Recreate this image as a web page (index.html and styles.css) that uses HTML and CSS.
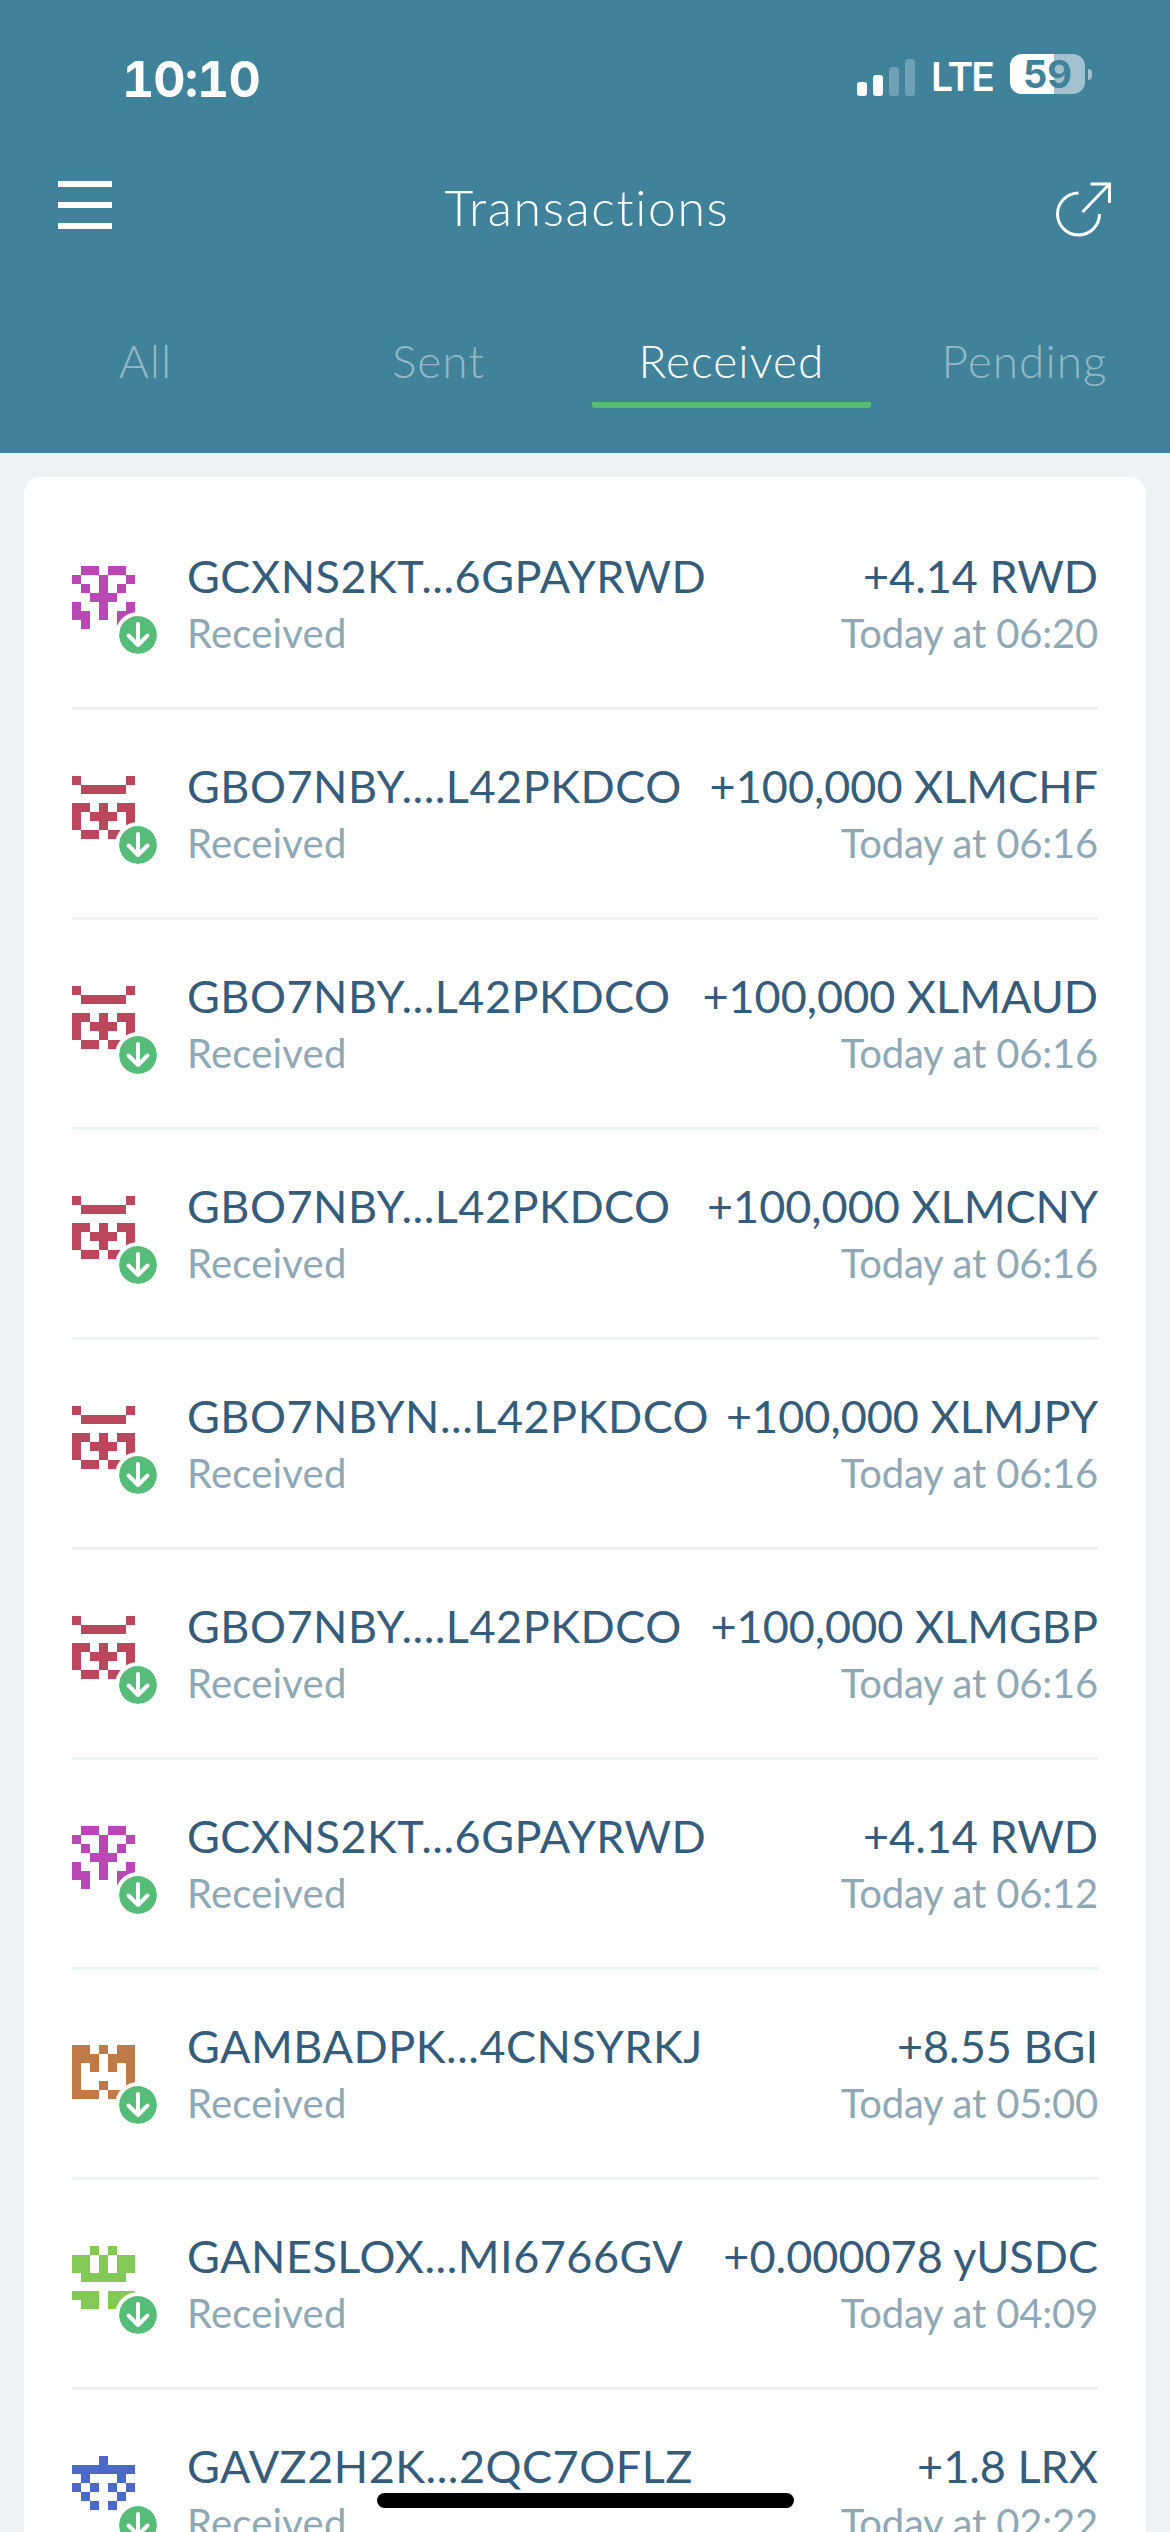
FILE: index.html
```html
<!DOCTYPE html>
<html lang="en">
<head>
    <meta charset="UTF-8">
    <meta name="viewport" content="width=device-width, initial-scale=1.0">
    <title>Transactions</title>
    <link rel="stylesheet" href="styles.css">
</head>
<body>

    <svg class="defs" width="0" height="0">
        <defs>
            <symbol id="id-purple" viewBox="0 0 7 7"><path d="M1 0h2v1h-2zM4 0h2v1h-2zM0 1h1v1h-1zM3 1h1v1h-1zM6 1h1v1h-1zM1 2h1v1h-1zM3 2h1v1h-1zM5 2h1v1h-1zM2 3h3v1h-3zM0 4h1v1h-1zM3 4h1v2h-1zM6 4h1v1h-1zM0 5h2v1h-2zM5 5h2v1h-2zM1 6h1v1h-1zM5 6h1v1h-1z"/></symbol>
            <symbol id="id-red" viewBox="0 0 7 7"><path d="M0 0h1v1h-1zM6 0h1v1h-1zM1 1h5v1h-5zM0 3h2v1h-2zM3 3h1v1h-1zM5 3h2v1h-2zM0 4h1v2h-1zM2 4h3v1h-3zM6 4h1v2h-1zM3 5h1v1h-1zM1 6h2v1h-2zM4 6h2v1h-2z"/></symbol>
            <symbol id="id-orange" viewBox="0 0 7 7"><path d="M0 1h2v1h-2zM3 1h1v1h-1zM5 1h2v1h-2zM0 2h3v1h-3zM4 2h3v1h-3zM0 3h1v1h-1zM2 3h1v1h-1zM4 3h1v1h-1zM6 3h1v1h-1zM0 4h1v1h-1zM6 4h1v1h-1zM0 5h1v1h-1zM3 5h1v1h-1zM6 5h1v1h-1zM0 6h3v1h-3zM4 6h3v1h-3z"/></symbol>
            <symbol id="id-green" viewBox="0 0 7 7"><path d="M2 0h1v1h-1zM4 0h1v1h-1zM0 1h2v2h-2zM3 1h1v2h-1zM5 1h2v2h-2zM1 3h5v1h-5zM0 5h3v1h-3zM4 5h3v1h-3zM1 6h2v1h-2zM4 6h2v1h-2z"/></symbol>
            <symbol id="id-blue" viewBox="0 0 7 7"><path d="M3 0h1v1h-1zM0 1h7v1h-7zM1 2h1v1h-1zM5 2h1v1h-1zM0 3h1v1h-1zM2 3h1v1h-1zM4 3h1v1h-1zM6 3h1v1h-1zM1 4h1v1h-1zM5 4h1v1h-1zM2 5h1v1h-1zM4 5h1v1h-1z"/></symbol>
            <symbol id="arrow-down" viewBox="0 0 38 38"><path d="M19 8v21M9.500 19.500l9.500 9.500 9.500-9.500" fill="none" stroke="#fff" stroke-width="4" stroke-linecap="round" stroke-linejoin="round"/></symbol>
        </defs>
    </svg>

    <header class="header">
        <div class="status-bar">
            <span class="clock">10:10</span>
            <div class="status-right">
                <div class="signal">
                    <span class="bar bar-1"></span>
                    <span class="bar bar-2"></span>
                    <span class="bar bar-3"></span>
                    <span class="bar bar-4"></span>
                </div>
                <span class="lte">LTE</span>
                <div class="battery">
                    <div class="battery-body">
                        <span class="battery-fill"></span>
                        <span class="battery-text">59</span>
                    </div>
                    <span class="battery-tip"></span>
                </div>
            </div>
        </div>

        <div class="nav-bar">
            <div class="menu-icon">
                <span></span>
                <span></span>
                <span></span>
            </div>
            <h1>Transactions</h1>
            <svg class="share-icon" width="60" height="60" viewBox="0 0 60 60">
                <path d="M22.500 13A21 21 0 1 0 43.500 34" fill="none" stroke="#fff" stroke-width="3"/>
                <path d="M26.500 32L52.500 5M34.500 4H53.500V23" fill="none" stroke="#fff" stroke-width="3"/>
            </svg>
        </div>

        <nav class="tabs">
            <div class="tab">All</div>
            <div class="tab">Sent</div>
            <div class="tab active">Received</div>
            <div class="tab">Pending</div>
        </nav>
    </header>

    <main class="card">
        <div class="row">
            <div class="avatar"><svg class="identicon purple"><use href="#id-purple"/></svg><span class="badge"><svg><use href="#arrow-down"/></svg></span></div>
            <div class="info"><div class="line-top"><span>GCXNS2KT...6GPAYRWD</span><span>+4.14 RWD</span></div><div class="line-sub"><span>Received</span><span>Today at 06:20</span></div></div>
        </div>
        <div class="row">
            <div class="avatar"><svg class="identicon red"><use href="#id-red"/></svg><span class="badge"><svg><use href="#arrow-down"/></svg></span></div>
            <div class="info"><div class="line-top"><span>GBO7NBY....L42PKDCO</span><span>+100,000 XLMCHF</span></div><div class="line-sub"><span>Received</span><span>Today at 06:16</span></div></div>
        </div>
        <div class="row">
            <div class="avatar"><svg class="identicon red"><use href="#id-red"/></svg><span class="badge"><svg><use href="#arrow-down"/></svg></span></div>
            <div class="info"><div class="line-top"><span>GBO7NBY...L42PKDCO</span><span>+100,000 XLMAUD</span></div><div class="line-sub"><span>Received</span><span>Today at 06:16</span></div></div>
        </div>
        <div class="row">
            <div class="avatar"><svg class="identicon red"><use href="#id-red"/></svg><span class="badge"><svg><use href="#arrow-down"/></svg></span></div>
            <div class="info"><div class="line-top"><span>GBO7NBY...L42PKDCO</span><span>+100,000 XLMCNY</span></div><div class="line-sub"><span>Received</span><span>Today at 06:16</span></div></div>
        </div>
        <div class="row">
            <div class="avatar"><svg class="identicon red"><use href="#id-red"/></svg><span class="badge"><svg><use href="#arrow-down"/></svg></span></div>
            <div class="info"><div class="line-top"><span>GBO7NBYN...L42PKDCO</span><span>+100,000 XLMJPY</span></div><div class="line-sub"><span>Received</span><span>Today at 06:16</span></div></div>
        </div>
        <div class="row">
            <div class="avatar"><svg class="identicon red"><use href="#id-red"/></svg><span class="badge"><svg><use href="#arrow-down"/></svg></span></div>
            <div class="info"><div class="line-top"><span>GBO7NBY....L42PKDCO</span><span>+100,000 XLMGBP</span></div><div class="line-sub"><span>Received</span><span>Today at 06:16</span></div></div>
        </div>
        <div class="row">
            <div class="avatar"><svg class="identicon purple"><use href="#id-purple"/></svg><span class="badge"><svg><use href="#arrow-down"/></svg></span></div>
            <div class="info"><div class="line-top"><span>GCXNS2KT...6GPAYRWD</span><span>+4.14 RWD</span></div><div class="line-sub"><span>Received</span><span>Today at 06:12</span></div></div>
        </div>
        <div class="row">
            <div class="avatar"><svg class="identicon orange"><use href="#id-orange"/></svg><span class="badge"><svg><use href="#arrow-down"/></svg></span></div>
            <div class="info"><div class="line-top"><span>GAMBADPK...4CNSYRKJ</span><span>+8.55 BGI</span></div><div class="line-sub"><span>Received</span><span>Today at 05:00</span></div></div>
        </div>
        <div class="row">
            <div class="avatar"><svg class="identicon green"><use href="#id-green"/></svg><span class="badge"><svg><use href="#arrow-down"/></svg></span></div>
            <div class="info"><div class="line-top"><span>GANESLOX...MI6766GV</span><span>+0.000078 yUSDC</span></div><div class="line-sub"><span>Received</span><span>Today at 04:09</span></div></div>
        </div>
        <div class="row">
            <div class="avatar"><svg class="identicon blue"><use href="#id-blue"/></svg><span class="badge"><svg><use href="#arrow-down"/></svg></span></div>
            <div class="info"><div class="line-top"><span>GAVZ2H2K...2QC7OFLZ</span><span>+1.8 LRX</span></div><div class="line-sub"><span>Received</span><span>Today at 02:22</span></div></div>
        </div>
    </main>

    <div class="home-indicator"></div>

</body>
</html>
```

FILE: styles.css
```css
* {
    margin: 0;
    padding: 0;
    box-sizing: border-box;
}

html, body {
    width: 1170px;
    height: 2532px;
    overflow: hidden;
}

body {
    position: relative;
    font-family: 'Lato', 'Open Sans', sans-serif;
    background-color: #edf2f5;
}

.defs {
    display: block;
    height: 0;
}

/* header */
.header {
    height: 453px;
    background-color: #40829a;
    color: #fff;
}

.status-bar {
    height: 144px;
    padding: 54px 78px 0 122px;
    display: flex;
    justify-content: space-between;
    align-items: flex-start;
}

.clock {
    font-family: 'Inter', sans-serif;
    font-size: 50px;
    font-weight: 700;
    line-height: 50px;
    letter-spacing: -1px;
    font-variant-numeric: tabular-nums;
}

.status-right {
    display: flex;
    align-items: flex-start;
    padding-top: 3px;
}

.signal {
    display: flex;
    align-items: flex-end;
    gap: 6px;
    height: 39px;
}

.bar {
    width: 10px;
    background-color: #fff;
    border-radius: 3px;
}

.bar-1 { height: 14px; }
.bar-2 { height: 21px; }
.bar-3 { height: 29px; opacity: 0.25; }
.bar-4 { height: 37px; opacity: 0.25; }

.lte {
    font-family: 'Inter', sans-serif;
    font-size: 39px;
    font-weight: 600;
    line-height: 40px;
    letter-spacing: -2px;
    margin-left: 16px;
    width: 79px;
}

.battery {
    display: flex;
    align-items: center;
    margin-top: -3px;
}

.battery-body {
    position: relative;
    width: 75px;
    height: 40px;
    border-radius: 12px;
    background-color: rgba(255, 255, 255, 0.5);
    text-align: center;
}

.battery-fill {
    position: absolute;
    left: 0;
    top: 0;
    bottom: 0;
    width: 44px;
    background-color: #fff;
    border-radius: 12px 0 0 12px;
}

.battery-text {
    position: relative;
    font-family: 'Inter', sans-serif;
    font-size: 38px;
    font-weight: 700;
    line-height: 40px;
    color: #40829a;
}

.battery-tip {
    width: 4px;
    height: 11px;
    margin-left: 3px;
    background-color: rgba(255, 255, 255, 0.5);
    border-radius: 0 4px 4px 0;
}

.nav-bar {
    display: grid;
    grid-template-columns: 1fr auto 1fr;
    align-items: center;
    height: 122px;
    padding: 0 54px 0 58px;
}

.nav-bar h1 {
    font-size: 50px;
    font-weight: 300;
    line-height: 60px;
    letter-spacing: 1.6px;
    color: #fff;
    padding-top: 4px;
}

.menu-icon {
    display: flex;
    flex-direction: column;
    gap: 15px;
    width: 54px;
}

.menu-icon span {
    height: 6px;
    background-color: #fff;
}

.share-icon {
    display: block;
    justify-self: end;
    margin-top: 10px;
}

.tabs {
    display: flex;
    gap: 14px;
    padding-left: 6px;
    margin-top: 64px;
}

.tab {
    width: 279px;
    height: 78px;
    text-align: center;
    font-size: 46px;
    font-weight: 300;
    line-height: 62px;
    letter-spacing: 1px;
    color: rgba(255, 255, 255, 0.45);
    border-bottom: 6px solid transparent;
    border-radius: 3px;
}

.tab.active {
    color: #fff;
    border-bottom-color: #55bd78;
}

/* list card */
.card {
    margin: 24px 24px 0;
    padding: 23px 48px 0;
    background-color: #fff;
    border-radius: 16px 16px 0 0;
}

.row {
    display: flex;
    align-items: flex-start;
    height: 210px;
    padding-top: 48px;
    border-bottom: 3px solid #edf2f5;
}

.avatar {
    position: relative;
    width: 63px;
    height: 63px;
    margin: 18px 52px 0 0;
    flex-shrink: 0;
}

.identicon {
    display: block;
    width: 63px;
    height: 63px;
    shape-rendering: crispEdges;
}

.purple { fill: #b948b5; }
.red { fill: #ba475c; }
.orange { fill: #c07a48; }
.green { fill: #83c955; }
.blue { fill: #4a69c9; }

.badge {
    position: absolute;
    left: 43px;
    top: 46px;
    width: 46px;
    height: 46px;
    padding: 4px;
    background-color: #55bd78;
    background-clip: content-box;
    border-radius: 50%;
    box-shadow: inset 0 0 0 4px #fff;
}

.badge svg {
    display: block;
    width: 38px;
    height: 38px;
}

.info {
    flex: 1;
    min-width: 0;
}

.line-top, .line-sub {
    display: flex;
    justify-content: space-between;
    white-space: nowrap;
}

.line-top {
    font-size: 45px;
    line-height: 56px;
    color: #355c7a;
}

.line-top span:first-child {
    letter-spacing: 0.5px;
}

.line-sub {
    font-size: 40px;
    line-height: 46px;
    margin-top: 6px;
    color: #8fa8b6;
}

.line-sub span:first-child {
    letter-spacing: 0.2px;
}

.line-sub span:last-child {
    letter-spacing: -0.2px;
}

.home-indicator {
    position: absolute;
    left: 377px;
    top: 2493px;
    width: 417px;
    height: 15px;
    background-color: #000;
    border-radius: 8px;
}
```
